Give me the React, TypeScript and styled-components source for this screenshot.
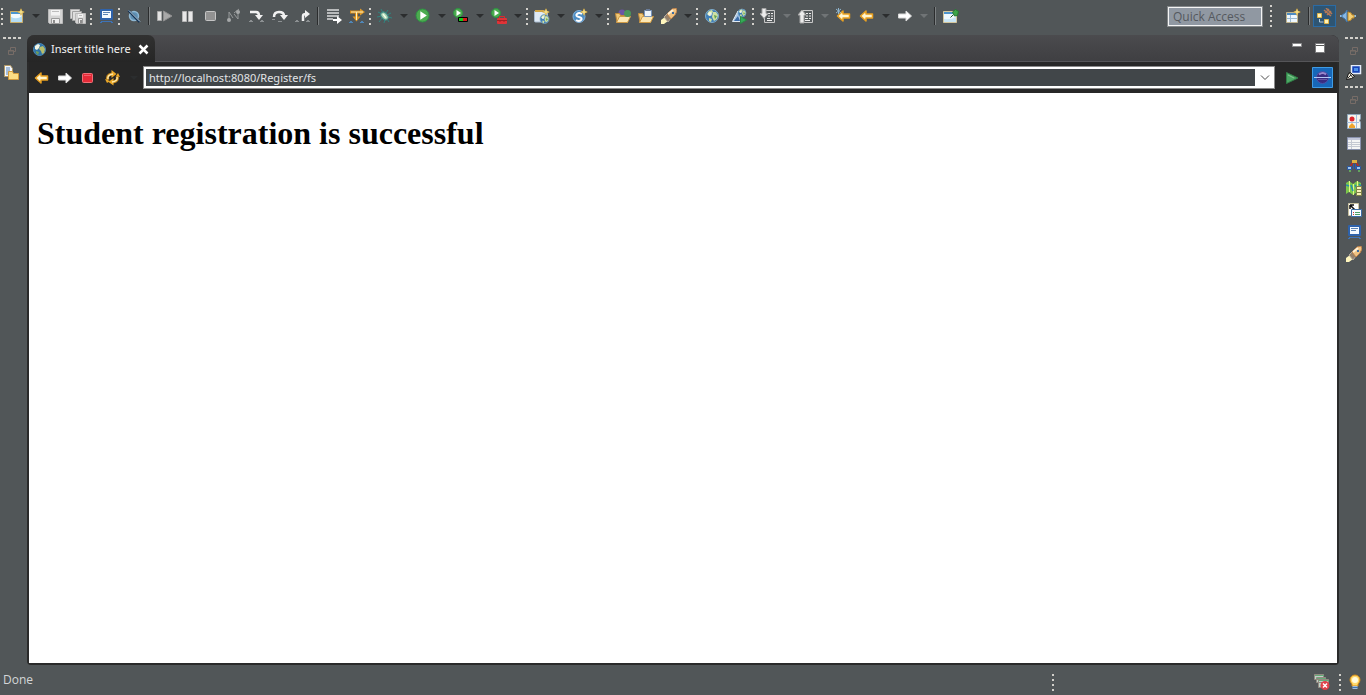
import React from "react";
import styled, { createGlobalStyle, css } from "styled-components";

const GlobalStyle = createGlobalStyle`
  * { box-sizing: border-box; }
  body { margin: 0; background: #515658; }
  button, input { font: inherit; color: inherit; }
`;

const uiFont = css`
  font-family: "Open Sans", "Noto Sans", sans-serif;
  font-size: 12px;
  line-height: 16px;
`;

const compactFont = css`
  font-family: "Noto Sans", "Open Sans", sans-serif;
  font-size: 11px;
`;

/* ---------- layout ---------- */

const Workbench = styled.div`
  ${uiFont}
  display: flex;
  flex-direction: column;
  min-height: 100vh;
  color: #e0e0e0;
  background: #515658;
`;

const MainToolbar = styled.header`
  display: flex;
  align-items: center;
  height: 35px;
  padding: 0 7px 3px 0;
`;

const ToolGroup = styled.div`
  display: flex;
  align-items: center;
`;

const PerspectiveGroup = styled(ToolGroup)`
  padding-left: 6px;
`;

const Spacer = styled.div`
  flex: 1;
`;

const IconButton = styled.button<{ $w?: number; $h?: number }>`
  display: flex;
  flex: none;
  align-items: center;
  justify-content: center;
  width: ${(p) => p.$w ?? 23}px;
  height: ${(p) => p.$h ?? 22}px;
  padding: 0;
  border: 0;
  background: transparent;
  svg { display: block; flex: none; }
`;

const MenuButton = styled(IconButton)<{ $dim?: boolean }>`
  width: 15px;
  &::after {
    content: "";
    border: 4px solid transparent;
    border-bottom: 0;
    border-top-color: ${(p) => (p.$dim ? "#707476" : "#2b2d2e")};
  }
`;

const PerspectiveButton = styled(IconButton)`
  border: 1px solid #2a6ba5;
  background: #2e5573;
`;

const Handle = styled.div`
  flex: none;
  width: 5px;
  height: 17px;
  background: repeating-linear-gradient(#d2d0cb 0 2px, transparent 2px 5px) 1px 0 / 2px 100% no-repeat;
`;

const TallHandle = styled(Handle)`
  height: 22px;
`;

const Separator = styled.div`
  flex: none;
  width: 8px;
  height: 18px;
  background: linear-gradient(90deg, #2b2d2e 1px, #7b7f81 1px) 3px 0 / 2px 100% no-repeat;
`;

const QuickAccess = styled.input`
  width: 96px;
  height: 21px;
  margin-right: 6px;
  padding: 0 0 0 4px;
  border: 2px solid #f4f4f4;
  outline: 1px solid #84888a;
  outline-offset: -1px;
  border-radius: 0;
  background: #9098a2;
  &::placeholder { color: #55595e; opacity: 1; }
`;

const Body = styled.div`
  display: flex;
  flex: 1;
`;

const Trim = styled.nav<{ $side: "left" | "right" }>`
  display: flex;
  flex: none;
  flex-direction: column;
  align-items: flex-start;
  width: 27px;
  padding-top: 2px;
  padding-left: ${(p) => (p.$side === "right" ? 3 : 0)}px;
`;

const TrimHandle = styled.div<{ $gap?: boolean }>`
  width: 18px;
  height: 3px;
  margin: ${(p) => (p.$gap ? 2 : 0)}px 3px 0;
  background: repeating-linear-gradient(90deg, #d2d0cb 0 3px, transparent 3px 5px) 0 0 / 100% 2px no-repeat;
`;

const Editor = styled.main`
  display: flex;
  flex: 1;
  flex-direction: column;
  min-width: 0;
  border: 2px solid #2a2a2a;
  border-top: 0;
  border-radius: 8px 8px 4px 4px;
  background: #272727;
`;

const TabBar = styled.div`
  display: flex;
  align-items: flex-start;
  height: 27px;
  margin: 0 -2px;
  padding-right: 8px;
  border-bottom: 1px solid #555558;
  border-radius: 8px 8px 0 0;
  background: linear-gradient(#4b4b4e, #3f3f42);
`;

const Tab = styled.div`
  ${compactFont}
  display: flex;
  align-items: center;
  height: 27px;
  padding: 1px 3px 0 6px;
  border-radius: 7px 7px 0 0;
  background: linear-gradient(#313131, #262626);
  color: #f2f2f2;
`;

const TabTitle = styled.span`
  padding: 0 4px 0 5px;
  white-space: nowrap;
`;

const NavBar = styled.div`
  display: flex;
  align-items: center;
  height: 31px;
  padding-left: 1px;
`;

const AddressBox = styled.div`
  display: flex;
  flex: 1;
  height: 23px;
  margin: 0 1px 0 2px;
  border: 1px solid #8b8b8b;
  background: #fff;
`;

const AddressInput = styled.input`
  ${compactFont}
  flex: 1;
  min-width: 0;
  height: 17px;
  margin: 2px 0 0 2px;
  padding: 0 0 0 3px;
  border: 0;
  border-radius: 0;
  background: #414649;
  color: #e2e4e6;
`;

const Page = styled.article`
  flex: 1;
  padding: 0 8px;
  background: #fff;
  color: #000;
  font-family: "Liberation Serif", "Times New Roman", serif;
`;

const Heading = styled.h1`
  margin: 22px 0;
  font-size: 32px;
  line-height: 37px;
`;

const StatusBar = styled.footer`
  display: flex;
  align-items: center;
  height: 30px;
  padding: 4px 0 0 3px;
`;

const StatusText = styled.span`
  padding-bottom: 4px;
  color: #d4d6d7;
`;

const StatusSlot = styled.div`
  display: flex;
  align-items: center;
  justify-content: flex-end;
  width: 277px;
  margin-right: 5px;
`;

/* ---------- icons ---------- */

const Svg = ({ children, w = 16, h = 16 }: { children: React.ReactNode; w?: number; h?: number }) => (
  <svg width={w} height={h} viewBox={`0 0 ${w} ${h}`} fill="none" aria-hidden="true">
    {children}
  </svg>
);

const Sparkle = ({ x = 12, y = 4 }: { x?: number; y?: number }) => (
  <g>
    <path d={`M${x} ${y - 4}l1.2 2.8L${x + 4} ${y}l-2.8 1.2L${x} ${y + 4}l-1.2-2.8L${x - 4} ${y}l2.8-1.2z`} fill="#c99a2c" />
    <path d={`M${x} ${y - 2.5}v5M${x - 2.5} ${y}h5`} stroke="#fff2a8" />
  </g>
);

const NewIcon = () => (
  <Svg>
    <path d="M1.5 3.5h12v11h-12z" fill="#f2fafe" stroke="#c9ad68" />
    <path d="M2 4h11v2H2z" fill="#4b95cf" />
    <path d="M2 9q6 3 11-1v6H2z" fill="#b4dcf3" />
    <Sparkle />
  </Svg>
);

const Disk = ({ x = 0, y = 0, s = 14 }: { x?: number; y?: number; s?: number }) => (
  <g>
    <path d={`M${x + 0.5} ${y + 0.5}h${s - 1}v${s - 1}h-${s - 2}l-1-1z`} fill="#d4d4d4" stroke="#b9b9b9" />
    <path d={`M${x + 3} ${y + 1}h${s - 6}v${s / 2 - 2}h-${s - 6}z`} fill="#f2f2f2" />
    <path d={`M${x + 4} ${y + 2.5}h${s - 8}`} stroke="#bdbdbd" />
    <path d={`M${x + 3.5} ${y + s - 5.5}h${s - 7}v5h-${s - 7}z`} fill="#ededed" stroke="#9b9b9b" />
    <path d={`M${x + 5} ${y + s - 4}h2v3h-2z`} fill="#8d8d8d" />
  </g>
);

const SaveIcon = () => <Svg><Disk x={1} y={1} s={15} /></Svg>;
const SaveAllIcon = () => (
  <Svg>
    <path d="M.5 1.5h9v9h-9z" fill="#dedede" stroke="#b0b0b0" />
    <path d="M2.5 3.5h9v9h-9z" fill="#dedede" stroke="#a0a0a0" />
    <Disk x={5} y={5} s={11} />
  </Svg>
);

const ConsoleIcon = () => (
  <Svg>
    <rect x="2" y="1" width="13" height="11" rx="1" fill="#2e62ab" />
    <path d="M4 3h9v7H4z" fill="#f4f9ff" />
    <path d="M5 4.500h7M5 6.500h5" stroke="#5b83b5" />
    <path d="M3 13h11v1H3z" fill="#3d73b8" /><path d="M2 14h2v1H2zM13 14h2v1h-2z" fill="#3d73b8" />
  </Svg>
);

const SkipIcon = () => (
  <Svg>
    <circle cx="8" cy="8" r="4.500" fill="#5f90b4" stroke="#8fb8d4" strokeWidth="1.500" />
    <path d="M2.500 2.500l11 11.500" stroke="#173454" strokeWidth="2.500" />
    <path d="M3 2.500L14 13.500" stroke="#c9e1f2" />
  </Svg>
);

const ResumeIcon = () => (
  <Svg>
    <path d="M.5 3.5h4v9h-4z" fill="#e3e3e3" stroke="#aaa" />
    <path d="M6.5 3v10L15 8z" fill="#a9a9a9" stroke="#8e8e8e" />
  </Svg>
);
const PauseIcon = () => (
  <Svg><path d="M2.5 3.5h4v10h-4zM8.500 3.5h4v10h-4z" fill="#e8e8e8" stroke="#b7b7b7" /></Svg>
);
const TerminateIcon = () => (
  <Svg><rect x="2.500" y="3.500" width="10" height="9" rx="1" fill="#929292" stroke="#c5c5c5" /></Svg>
);
const DisconnectIcon = () => (
  <Svg>
    <path d="M3 12V4l4 6M8 6l4 5V4M8 5l5-4" stroke="#96999a" />
    <circle cx="3" cy="12" r="2" fill="#a6a8a9" />
    <circle cx="12" cy="4" r="2" fill="#a6a8a9" />
  </Svg>
);

const Bits = () => <path d="M0 13.500h4M11 13.500h4M1 12.500h2M12 12.500h2" stroke="#8c9092" />;
const StepIntoIcon = () => (
  <Svg>
    <path d="M1 4h6q3 0 3 4" stroke="#f1f1f1" strokeWidth="2.500" />
    <path d="M6 7h8l-4 5z" fill="#f1f1f1" /><Bits />
  </Svg>
);
const StepOverIcon = () => (
  <Svg>
    <path d="M2 9q0-5 5-5t5 4" stroke="#f1f1f1" strokeWidth="2.500" />
    <path d="M8 7h8l-4 5z" fill="#f1f1f1" />
    <path d="M6 13.500h4M0 11.500h3" stroke="#8c9092" />
  </Svg>
);
const StepReturnIcon = () => (
  <Svg>
    <path d="M8 13V8q0-2 3-2" stroke="#f1f1f1" strokeWidth="2.500" />
    <path d="M10 2l5 4-5 4z" fill="#f1f1f1" /><Bits />
  </Svg>
);
const FrameIcon = () => (
  <Svg>
    <path d="M1 1h12v2H1zM1 4h12v2H1zM1 7h12v2H1zM1 10h6v2H1z" fill="#b9bbbc" />
    <path d="M7 12h5" stroke="#fff" strokeWidth="2" /><path d="M11 8l5 4-5 4z" fill="#fff" />
  </Svg>
);
const FilterIcon = () => (
  <Svg>
    <path d="M1 4h11M7.500 4v7" stroke="#d98a14" strokeWidth="3" />
    <path d="M11 .500l5 3.500-5 3.500zM3.500 8.500h8l-4 5z" fill="#e09a2a" />
    <path d="M2 4h12M7.500 4v8" stroke="#fff0bb" />
    <path d="M0 14.500h4M11 14.500h4M1 13.500h2M12 13.500h2" stroke="#4f87b8" />
  </Svg>
);

const BugIcon = () => (
  <Svg>
    <path d="M4 1l2 4M1 4l4 2M0 9l5-1M2 14l3-4M7 15l1-4M12 14l-2-3M15 10l-4-1M14 5l-4 2M11 2L9 5" stroke="#2f8580" />
    <ellipse cx="7.500" cy="8" rx="3" ry="4.500" transform="rotate(-40 7.500 8)" fill="#a5cdb0" stroke="#3a8480" />
    <path d="M6 6l3 4" stroke="#f0ffe8" strokeWidth="1.500" />
  </Svg>
);
const RunBall = ({ r = 6.5, x = 7.5, y = 7.5 }: { r?: number; x?: number; y?: number }) => (
  <g>
    <circle cx={x} cy={y} r={r} fill="#4cab4f" stroke="#2f9344" />
    <path d={`M${x - r / 3} ${y - r * 0.65}v${r * 1.3}l${r} -${r * 0.65}z`} fill="#fff" />
  </g>
);
const RunIcon = () => <Svg><RunBall /></Svg>;
const CoverageIcon = () => (
  <Svg><RunBall r={4.5} x={5} y={5} /><path d="M5.500 9.500h9v4h-9z" fill="#15c81c" stroke="#000" /><path d="M10 10h4v3h-4z" fill="#d51b1b" /></Svg>
);
const ExternalToolsIcon = () => (
  <Svg>
    <RunBall r={4.5} x={5} y={5} />
    <path d="M8.500 10V8.500h5V10" stroke="#d82c2c" />
    <rect x="6" y="10" width="10" height="6" rx="1" fill="#df3337" />
    <path d="M6 12.500h10M9 12v2M13 12v2" stroke="#a02023" />
  </Svg>
);

const Globe = ({ x = 8, y = 8, r = 6.5 }: { x?: number; y?: number; r?: number }) => (
  <g transform={`translate(${x} ${y}) scale(${r / 6.5})`}>
    <circle r="6.500" fill="#3f7fb8" stroke="#7faccb" />
    <path d="M-5-2l2-3 3-1 1 2-2 2-1 2-2-1zM1-4l3 0 2 3-1 4-3 2-2-4zM-3 2l3 1-1 3-2-1z" fill="#cfe0a4" />
    <path d="M2-1l3 1-2 3z" fill="#62a34b" />
    <circle cx="-2" cy="-2" r="2" fill="#fff" opacity=".7" />
  </g>
);
const WebProjectIcon = () => (
  <Svg>
    <path d="M.500 4q0-1 1-1h10q2 0 2 1v9q0 1-2 1H1.500q-1 0-1-1z" fill="#dfeaf5" stroke="#a9bcd0" />
    <path d="M1 3h9" stroke="#cfa548" strokeWidth="2" />
    <Globe x={10.5} y={11} r={4.5} /><Sparkle />
  </Svg>
);
const ServletIcon = () => (
  <Svg>
    <circle cx="7" cy="8.500" r="6" fill="#4c8dc4" stroke="#82b1da" />
    <path d="M10 6Q7 4 5 6t2 3 2 3-5 0" stroke="#fff" strokeWidth="2" /><Sparkle />
  </Svg>
);
const Folder = () => (
  <g><path d="M.5 5.500h4l1 2h7v7H2z" fill="#f0c878" stroke="#c08a3a" /><path d="M1.500 14.500l3-6h11l-3 6z" fill="#fce7b4" stroke="#cf9a45" /></g>
);
const OpenTypeIcon = () => <Svg><circle cx="7" cy="5" r="3.500" fill="#6c55a3" /><Folder /><circle cx="12.500" cy="5.500" r="3.500" fill="#4b965b" /></Svg>;
const OpenTaskIcon = () => <Svg><Folder /><path d="M6.500 2.500h7v6h-7z" fill="#eef5fc" stroke="#7894bb" /><path d="M8 1h4v2H8z" fill="#697c99" /></Svg>;
const TorchIcon = () => (
  <Svg>
    <path d="M0 12l4-3 3 4-4 3H0z" fill="#fff6bd" />
    <path d="M3 9l3-3 4 4-3 4z" fill="#94816c" stroke="#b6aca1" />
    <path d="M6 6l5-5 4-1 1 3-2 4-4 4z" fill="#f0c384" stroke="#bd8149" />
    <path d="M7 6l5-4" stroke="#fff2d9" strokeWidth="2" /><path d="M11 4h2v2h-2z" fill="#3b6ca3" />
  </Svg>
);
const GlobeIcon = () => <Svg><Globe /></Svg>;
const WebSearchIcon = () => (
  <Svg>
    <path d="M.500 13.500L6 3l4 7-2 3.500z" fill="#a9c6e2" stroke="#dfeaf4" /><path d="M2 13l4-5 2 5z" fill="#3c6ca8" />
    <Globe x={10} y={5} r={4} />
    <path d="M8.500 8.500v7l6-3.500z" fill="#35a957" stroke="#2b8a45" />
  </Svg>
);
const AnnotationIcon = ({ up }: { up?: boolean }) => (
  <Svg>
    <path d="M4.500 2.500h10v12h-10z" fill="#565b5d" stroke="#c8c8c8" />
    <path d="M8 5.500h2M11 5.500h2M8 8h2M11 8h2M7 10.500h3M11 10.500h2M7 12.500h5" stroke="#eee" />
    <path d={up ? "M0 7l4-5 4 5H6v8H2V7z" : "M2 .500h4v5h2l-4 5-4-5h2z"} fill="#ececec" stroke="#a5a5a5" />
  </Svg>
);
const ArrowIcon = ({ kind }: { kind: "back" | "forward" | "edit" }) => {
  const gold = kind !== "forward";
  return (
    <Svg>
      <path
        d={gold ? "M1.500 8L7 3v3h6.500v4H7v3z" : "M14.500 8L9 3v3H1.500v4H9v3z"}
        fill={gold ? "#fff5cf" : "#fff"}
        stroke={gold ? "#e8a021" : "#dadada"}
        strokeWidth={gold ? 1.5 : 1}
        strokeLinejoin="round"
      />
      {kind === "edit" && <path d="M2.500 0v6M0 1l5 4M5 1L0 5" stroke="#8fb6cf" />}
    </Svg>
  );
};
const PinEditorIcon = () => (
  <Svg>
    <path d="M.5 3.500h13v11H.5z" fill="#eff9ff" stroke="#d5c79d" /><path d="M1 4h9v2H1z" fill="#4e94cd" />
    <path d="M1 11q7 1 12-2v5H1z" fill="#c9e6f6" />
    <path d="M7.500 9.500l3-3" stroke="#275a2a" /><path d="M9.500 4l3-2.500 3 2-1 4-3 .500z" fill="#3da448" stroke="#247b32" />
  </Svg>
);
const OpenPerspectiveIcon = () => (
  <Svg><path d="M1.500 4.500h11v10h-11z" fill="#edf7ff" stroke="#c2b58c" /><path d="M2 5h10v2H2z" fill="#4c8bc3" /><path d="M5.500 7v7M2 10.500h10" stroke="#9bbbd5" /><Sparkle /></Svg>
);
const JavaEeIcon = () => (
  <Svg>
    <path d="M.5 5.500h4v4h-4zM7.500 11.500h4v4h-4z" fill="#fff4bb" stroke="#e1b64a" />
    <path d="M2.500 11v3h4" stroke="#b2c9da" />
    <path d="M7 2l7 6M9 0l6 6M8 5l4-4M10 7l4-4" stroke="#b57855" strokeWidth="1.500" />
  </Svg>
);
const PlugIcon = () => (
  <Svg>
    <path d="M0 8h3M13 8h3" stroke="#8cbbe6" strokeWidth="2" />
    <path d="M2 7l3-2 2-3v12l-2-3-3-2z" fill="#8ab8e2" stroke="#3e76ad" />
    <path d="M8 4l3 1 1 2h2v3h-2l-1 2-3 1z" fill="#f3ce75" stroke="#c18d2d" />
  </Svg>
);

const RestoreIcon = () => (
  <Svg w={10} h={10}><path d="M3.500 4V1.500h5v4H6.500M1.500 4.500h5v4h-5zM1 5h6" stroke="#776c67" /></Svg>
);
const ExplorerIcon = () => (
  <Svg>
    <path d="M.500.500h6l2 3v8h-8z" fill="#f3f8ff" stroke="#b49a65" /><path d="M2 3h4M2 5h4M2 7h3M2 9h2" stroke="#5684ba" />
    <path d="M4.500 6.500h4l1 2h5v6h-10z" fill="#fbdc84" stroke="#d39a3c" />
  </Svg>
);
const LinkIcon = () => (
  <Svg>
    <path d="M5.500.5h9v8h-9z" fill="#1744b7" stroke="#e6edfa" strokeWidth="1.500" /><path d="M8 3h4v3H8z" fill="#4d91e8" />
    <path d="M.500 14.500l2-6 2-1 4 4-3 2z" fill="#efeadd" stroke="#111" /><path d="M3 7l4 6M2 13l3-3" stroke="#333" />
  </Svg>
);
const SnippetsIcon = () => (
  <Svg>
    <path d="M1.500.5h13v4l-1 2 1 2v6h-13z" fill="#f6f5ed" stroke="#91a9bd" />
    <path d="M10.500 1v13M1 8.500h12" stroke="#a4c0df" /><circle cx="6" cy="5" r="2.500" fill="#df282f" />
    <path d="M3 14v-2l3-3 3 3v2z" fill="#efa52d" />
  </Svg>
);
const PropertiesIcon = () => (
  <Svg><path d="M1.500 1.500h13v12h-13z" fill="#f5f5f5" stroke="#8992ad" /><path d="M2 2h12v2H2z" fill="#c2c8da" /><path d="M5.500 4v9M2 6.500h12M2 8.500h12M2 10.500h12" stroke="#c5c9d2" /></Svg>
);
const ServersIcon = () => (
  <Svg>
    <path d="M7 4L4 9M10 4l3 5" stroke="#b72d29" strokeWidth="1.500" />
    <path d="M6 2h5v3H6z" fill="#e0b040" /><path d="M7 6h1v5H7zM9 6h1v5H9z" fill="#2d56b6" />
    <path d="M1.500 8.500h4v3h-4zM10.500 8.500h4v3h-4z" fill="#9cc6ee" stroke="#2a58a0" /><path d="M3 12h2v2H3zM12 12h2v2h-2z" fill="#62a35d" />
  </Svg>
);
const DataSourceIcon = () => (
  <Svg>
    <path d="M0 3l3-2 4 3 4-3 4 2v10l-4-1-4 3-4-3-3 2z" fill="#7cc84c" />
    <path d="M3.500 1v11M7.500 4v11M11.500 1v11" stroke="#e4f48c" /><path d="M0 5l3 1M5 5l2 6M9 5l2 3M13 4l2 2" stroke="#298bb0" strokeWidth="1.500" />
    <path d="M10.500 6.500h5v3h-5zM10.500 9.500h5v3h-5zM10.500 12.500h5v3h-5z" fill="#f7f0b8" stroke="#7c8148" />
  </Svg>
);
const OutlineIcon = () => (
  <Svg>
    <path d="M2.500 1.500h10v12h-10z" fill="#fff" stroke="#c9c2a1" /><path d="M4 3l5 5M4 3h4M4 3v4" stroke="#111" strokeWidth="1.500" />
    <path d="M5.500 7.500h10v7h-10z" fill="#f7fbff" stroke="#3c6da6" /><path d="M7 10.500h1M7 12.500h1" stroke="#d33" /><path d="M9 10.500h5M9 12.500h5" stroke="#4ba066" />
  </Svg>
);

const CloseIcon = () => <Svg w={11} h={11}><path d="M1.500 1.500l8 8M9.500 1.500l-8 8" stroke="#fff" strokeWidth="2.500" /></Svg>;
const MinimizeIcon = () => <Svg w={10} h={4}><path d="M.5.5h9v3h-9z" fill="#fff" stroke="#8a8a8c" /></Svg>;
const MaximizeIcon = () => <Svg w={10} h={10}><path d="M.5.5h9v9h-9z" fill="#fff" stroke="#7a7a7c" /><path d="M1 2.500h8" stroke="#555" /></Svg>;
const StopIcon = () => <Svg><rect x="2.500" y="3.500" width="10" height="9" rx="1" fill="#e52b38" stroke="#ef7178" /><path d="M4 5.500h7" stroke="#f0606b" /></Svg>;
const RefreshIcon = () => (
  <Svg>
    <path d="M3 10q-2-5 4-6M12 6q2 5-4 6" stroke="#c98a1c" strokeWidth="3" />
    <path d="M6.500 0l5 4-5 4zM8.500 8v7.500l-5-3.500zM11 6l2-3 2 4zM0 9l2 4 3-2z" fill="#eca928" />
    <path d="M3 9q-1-4 5-5M12 7q1 4-5 5" stroke="#ffe9a8" strokeWidth="1.500" />
  </Svg>
);
const ChevronIcon = () => <Svg w={10} h={6}><path d="M1 .5l4 4 4-4" stroke="#4b4b4b" /></Svg>;
const GoIcon = () => <Svg><path d="M2.500 2.500v11L14 8z" fill="#4ca864" stroke="#318047" /><path d="M4 5l6 3" stroke="#8ac796" /></Svg>;
const EclipseIcon = () => (
  <Svg w={21} h={21}>
    <path d="M.5.5h20v20H.5z" fill="#1767b8" stroke="#3f9ce4" />
    <circle cx="10.500" cy="10.500" r="6" fill="#3a2c80" stroke="#4a55ac" />
    <path d="M7 7.500q4-3 7 0" stroke="#9a87cc" strokeWidth="2" /><path d="M2 10.500h17" stroke="#b5c8f5" /><path d="M6 12.500h9" stroke="#6757a3" />
  </Svg>
);
const TabGlobe = () => (
  <Svg w={13} h={13}>
    <circle cx="6.500" cy="6.500" r="6" fill="#2f73a8" stroke="#4c88b4" />
    <path d="M2 3l3-2 2 1-1 3-2 2-2-1z" fill="#f2f5e4" />
    <path d="M7 4l3-1 2 3-1 4-2 1-1-3-2-2z" fill="#b7bd6c" />
    <path d="M3 8l3 1-1 3-2-2z" fill="#6f9c5c" />
  </Svg>
);
const ErrorsIcon = () => (
  <Svg>
    <path d="M.5.500h9v5h-9zM2.500 3.500h9v5h-9zM4.500 5.500h10v8h-10z" fill="#bed3c9" stroke="#938a81" />
    <path d="M1 1.500h9M3 4.500h9M5 6.500h10" stroke="#65a978" /><circle cx="11" cy="11.500" r="4.500" fill="#df4149" />
    <path d="M9 9.500l4 4M13 9.500l-4 4" stroke="#fff" strokeWidth="1.500" />
  </Svg>
);
const BulbIcon = () => (
  <Svg>
    <path d="M8 1a5 5 0 0 1 5 5q0 2-2 4v2H5v-2Q3 8 3 6a5 5 0 0 1 5-5z" fill="#ffd96b" stroke="#d58a17" />
    <circle cx="8" cy="6" r="3" fill="#fffbe0" /><path d="M5.500 12h5v3h-5z" fill="#9dbbe0" /><path d="M5 13.500h6" stroke="#4674a5" />
  </Svg>
);

/* ---------- toolbar data ---------- */

type Tool = { label: string; icon: React.ReactNode; menu?: "on" | "dim" };

const toolGroups: { lead: "handle" | "separator"; tools: Tool[] }[] = [
  { lead: "handle", tools: [
    { label: "New", icon: <NewIcon />, menu: "on" },
    { label: "Save", icon: <SaveIcon /> },
    { label: "Save All", icon: <SaveAllIcon /> },
  ] },
  { lead: "handle", tools: [{ label: "Open Console", icon: <ConsoleIcon /> }] },
  { lead: "handle", tools: [{ label: "Skip All Breakpoints", icon: <SkipIcon /> }] },
  { lead: "separator", tools: [
    { label: "Resume", icon: <ResumeIcon /> },
    { label: "Suspend", icon: <PauseIcon /> },
    { label: "Terminate", icon: <TerminateIcon /> },
    { label: "Disconnect", icon: <DisconnectIcon /> },
    { label: "Step Into", icon: <StepIntoIcon /> },
    { label: "Step Over", icon: <StepOverIcon /> },
    { label: "Step Return", icon: <StepReturnIcon /> },
  ] },
  { lead: "separator", tools: [
    { label: "Drop to Frame", icon: <FrameIcon /> },
    { label: "Use Step Filters", icon: <FilterIcon /> },
  ] },
  { lead: "handle", tools: [
    { label: "Debug", icon: <BugIcon />, menu: "on" },
    { label: "Run", icon: <RunIcon />, menu: "on" },
    { label: "Coverage", icon: <CoverageIcon />, menu: "on" },
    { label: "External Tools", icon: <ExternalToolsIcon />, menu: "on" },
  ] },
  { lead: "handle", tools: [
    { label: "New Web Project", icon: <WebProjectIcon />, menu: "on" },
    { label: "New Servlet", icon: <ServletIcon />, menu: "on" },
  ] },
  { lead: "handle", tools: [
    { label: "Open Type", icon: <OpenTypeIcon /> },
    { label: "Open Task", icon: <OpenTaskIcon /> },
    { label: "Search", icon: <TorchIcon />, menu: "on" },
  ] },
  { lead: "handle", tools: [{ label: "Open Web Browser", icon: <GlobeIcon /> }] },
  { lead: "handle", tools: [{ label: "Web Services Explorer", icon: <WebSearchIcon /> }] },
  { lead: "handle", tools: [
    { label: "Next Annotation", icon: <AnnotationIcon />, menu: "dim" },
    { label: "Previous Annotation", icon: <AnnotationIcon up />, menu: "dim" },
    { label: "Last Edit Location", icon: <ArrowIcon kind="edit" /> },
    { label: "Back", icon: <ArrowIcon kind="back" />, menu: "on" },
    { label: "Forward", icon: <ArrowIcon kind="forward" />, menu: "dim" },
  ] },
  { lead: "separator", tools: [{ label: "Pin Editor", icon: <PinEditorIcon /> }] },
];

const rightViews: Tool[] = [
  { label: "Snippets", icon: <SnippetsIcon /> },
  { label: "Properties", icon: <PropertiesIcon /> },
  { label: "Servers", icon: <ServersIcon /> },
  { label: "Data Source Explorer", icon: <DataSourceIcon /> },
  { label: "Outline", icon: <OutlineIcon /> },
  { label: "Console", icon: <ConsoleIcon /> },
  { label: "Search results", icon: <TorchIcon /> },
];

export default function App() {
  return (
    <Workbench>
      <GlobalStyle />
      <MainToolbar>
        {toolGroups.map((group, i) => (
          <ToolGroup key={i}>
            {group.lead === "handle" ? <Handle /> : <Separator />}
            {group.tools.map((tool) => (
              <React.Fragment key={tool.label}>
                <IconButton aria-label={tool.label}>{tool.icon}</IconButton>
                {tool.menu && <MenuButton aria-label={`${tool.label} menu`} $dim={tool.menu === "dim"} />}
              </React.Fragment>
            ))}
          </ToolGroup>
        ))}
        <Spacer />
        <QuickAccess aria-label="Quick Access" placeholder="Quick Access" />
        <TallHandle />
        <PerspectiveGroup>
          <IconButton $w={25} aria-label="Open Perspective"><OpenPerspectiveIcon /></IconButton>
          <Separator />
          <PerspectiveButton aria-label="Java EE"><JavaEeIcon /></PerspectiveButton>
          <IconButton aria-label="Plug-in Development"><PlugIcon /></IconButton>
        </PerspectiveGroup>
      </MainToolbar>

      <Body>
        <Trim $side="left">
          <TrimHandle />
          <IconButton aria-label="Restore left"><RestoreIcon /></IconButton>
          <IconButton aria-label="Project Explorer"><ExplorerIcon /></IconButton>
        </Trim>

        <Editor>
          <TabBar>
            <Tab>
              <TabGlobe />
              <TabTitle>Insert title here</TabTitle>
              <IconButton $w={17} aria-label="Close tab"><CloseIcon /></IconButton>
            </Tab>
            <Spacer />
            <IconButton $h={20} aria-label="Minimize"><MinimizeIcon /></IconButton>
            <IconButton $h={26} aria-label="Maximize"><MaximizeIcon /></IconButton>
          </TabBar>
          <NavBar>
            <IconButton aria-label="Go back"><ArrowIcon kind="back" /></IconButton>
            <IconButton aria-label="Go forward"><ArrowIcon kind="forward" /></IconButton>
            <IconButton aria-label="Stop"><StopIcon /></IconButton>
            <IconButton $w={27} aria-label="Refresh"><RefreshIcon /></IconButton>
            <MenuButton aria-label="Refresh menu" />
            <AddressBox>
              <AddressInput aria-label="Address" defaultValue="http://localhost:8080/Register/fs" />
              <IconButton $w={19} $h={21} aria-label="Show history"><ChevronIcon /></IconButton>
            </AddressBox>
            <IconButton $w={31} aria-label="Go"><GoIcon /></IconButton>
            <IconButton $w={30} aria-label="Eclipse home"><EclipseIcon /></IconButton>
          </NavBar>
          <Page>
            <Heading>Student registration is successful</Heading>
          </Page>
        </Editor>

        <Trim $side="right">
          <TrimHandle />
          <IconButton aria-label="Restore right"><RestoreIcon /></IconButton>
          <IconButton aria-label="Link view"><LinkIcon /></IconButton>
          <TrimHandle $gap />
          <IconButton aria-label="Restore views"><RestoreIcon /></IconButton>
          {rightViews.map((view) => (
            <IconButton key={view.label} aria-label={view.label}>{view.icon}</IconButton>
          ))}
        </Trim>
      </Body>

      <StatusBar>
        <StatusText>Done</StatusText>
        <Spacer />
        <Handle />
        <StatusSlot>
          <IconButton aria-label="Errors"><ErrorsIcon /></IconButton>
        </StatusSlot>
        <Handle />
        <IconButton aria-label="Tip of the day"><BulbIcon /></IconButton>
      </StatusBar>
    </Workbench>
  );
}
